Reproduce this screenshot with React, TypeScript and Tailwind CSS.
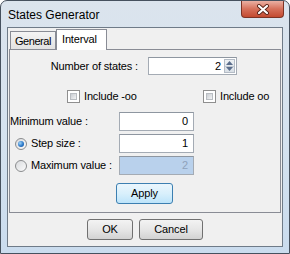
import React from "react";

function Checkbox() {
  return (
    <div className="w-[13px] h-[13px] border border-[#8f8f8f] bg-white p-[2px] shrink-0">
      <div className="w-full h-full border border-[#b9bdc2] bg-gradient-to-br from-[#c9cdd2] to-[#f3f4f5]" />
    </div>
  );
}

function Radio({ checked }: { checked?: boolean }) {
  return (
    <div className="w-[12px] h-[12px] rounded-full border border-[#8a8c8e] bg-gradient-to-br from-[#d9dbde] to-[#fbfbfb] flex items-center justify-center shrink-0">
      {checked && (
        <div className="w-[6px] h-[6px] rounded-full bg-[radial-gradient(circle_at_35%_35%,#9fd4f7_0%,#2b78c9_55%,#144f92_100%)]" />
      )}
    </div>
  );
}

function TextBox({ value, disabled }: { value: string; disabled?: boolean }) {
  return (
    <div
      className={
        "w-[75px] h-[19px] border border-[#a4abb4] border-t-[#8e96a0] flex items-center justify-end pr-[5px] " +
        (disabled ? "bg-[#b9d1ec] text-[#8fa2bb]" : "bg-white text-black")
      }
    >
      {value}
    </div>
  );
}

export default function App() {
  return (
    <div className="w-[290px] h-[254px] overflow-hidden rounded-t-[7px] border border-[#46515e] bg-gradient-to-b from-[#dbe4ed] via-[#d5e2ef] to-[#cadcee] flex flex-col font-['Liberation_Sans',Arial,sans-serif] text-[11px] tracking-[-0.15px] text-black">
      {/* Title bar */}
      <div className="h-[26px] flex justify-between shrink-0">
        <div className="pl-[7px] self-center text-[12px] tracking-normal text-black leading-none pt-[1px]">States Generator</div>
        <div className="mr-[5px] w-[43px] h-[17px] rounded-b-[4px] border border-t-0 border-[#7d3324] bg-gradient-to-b from-[#eab0a3] via-[#d6705a] to-[#c34a2f] flex items-center justify-center">
          <svg width="14" height="11" viewBox="0 0 14 11">
            <path d="M3 2 L11 9 M11 2 L3 9" stroke="#5a2418" strokeWidth="4" strokeLinecap="round" />
            <path d="M3 2 L11 9 M11 2 L3 9" stroke="#ffffff" strokeWidth="2.2" strokeLinecap="round" />
          </svg>
        </div>
      </div>

      {/* Client area */}
      <div className="mx-[6px] h-[220px] border border-[#6f7b88] bg-[#f0f0f0] flex flex-col shrink-0">
        <div className="mx-[1px] mt-[1px] flex flex-col">
          {/* tabs */}
          <div className="h-[20px] flex items-end pl-[1px]">
            <div className="w-[46px] h-[18px] border border-b-0 border-[#898c95] bg-gradient-to-b from-[#f4f4f4] to-[#e2e2e2] flex items-center pl-[4px] pt-[2px] whitespace-nowrap tracking-[-0.45px]">
              General
            </div>
            <div className="relative z-10 w-[51px] h-[21px] -mb-[1px] border border-b-0 border-[#898c95] bg-white flex items-center pl-[5px] pb-[1px] whitespace-nowrap">
              Interval
            </div>
          </div>
          {/* panel */}
          <div className="h-[164px] border border-[#898c95] bg-[#f0f0f0] flex flex-col">
            {/* number of states */}
            <div className="mt-[7px] h-[18px] flex items-center">
              <div className="w-[128px] text-right">Number of states :</div>
              <div className="ml-[10px] w-[89px] h-[18px] border border-[#a4abb4] border-t-[#8e96a0] bg-white flex items-center">
                <div className="flex-1 text-right pr-[3px]">2</div>
                <div className="w-[11px] h-[14px] mr-[1px] flex flex-col border border-[#b4bcc6] bg-gradient-to-b from-[#eef1f4] to-[#d9dfe6]">
                  <div className="flex-1 flex items-center justify-center border-b border-[#c2c9d1]">
                    <svg width="7" height="4" viewBox="0 0 7 4"><path d="M0 4 L3.5 0 L7 4 Z" fill="#5b6e8c" /></svg>
                  </div>
                  <div className="flex-1 flex items-center justify-center">
                    <svg width="7" height="4" viewBox="0 0 7 4"><path d="M0 0 L3.5 4 L7 0 Z" fill="#5b6e8c" /></svg>
                  </div>
                </div>
              </div>
            </div>
            {/* include checkboxes */}
            <div className="mt-[15px] h-[13px] flex items-center">
              <div className="ml-[57px] w-[136px] flex items-center gap-[4px]">
                <Checkbox />
                <span>Include -oo</span>
              </div>
              <div className="flex items-center gap-[4px]">
                <Checkbox />
                <span>Include oo</span>
              </div>
            </div>
            {/* minimum value */}
            <div className="mt-[9px] h-[19px] flex items-center">
              <div className="w-[109px]">Minimum value :</div>
              <TextBox value="0" />
            </div>
            {/* step size */}
            <div className="mt-[3px] h-[19px] flex items-center">
              <div className="w-[109px] flex items-center pl-[5px] gap-[4px]">
                <Radio checked />
                <span>Step size :</span>
              </div>
              <TextBox value="1" />
            </div>
            {/* maximum value */}
            <div className="mt-[3px] h-[19px] flex items-center">
              <div className="w-[109px] flex items-center pl-[5px] gap-[4px]">
                <Radio />
                <span>Maximum value :</span>
              </div>
              <TextBox value="2" disabled />
            </div>
            {/* apply */}
            <div className="mt-[8px] flex">
              <div className="ml-[106px] w-[57px] h-[21px] rounded-[3px] border border-[#3c7fb1] bg-gradient-to-b from-[#eaf6fd] via-[#d9f0fc] to-[#bde4fa] flex items-center justify-center">
                Apply
              </div>
            </div>
          </div>
        </div>
        {/* bottom buttons */}
        <div className="mt-[6px] flex justify-center gap-[6px]">
          <div className="w-[46px] h-[21px] rounded-[3px] border border-[#707070] bg-gradient-to-b from-[#f3f3f3] via-[#e6e6e6] to-[#d2d2d2] flex items-center justify-center">
            OK
          </div>
          <div className="w-[64px] h-[21px] rounded-[3px] border border-[#707070] bg-gradient-to-b from-[#f3f3f3] via-[#e6e6e6] to-[#d2d2d2] flex items-center justify-center">
            Cancel
          </div>
        </div>
      </div>
    </div>
  );
}
